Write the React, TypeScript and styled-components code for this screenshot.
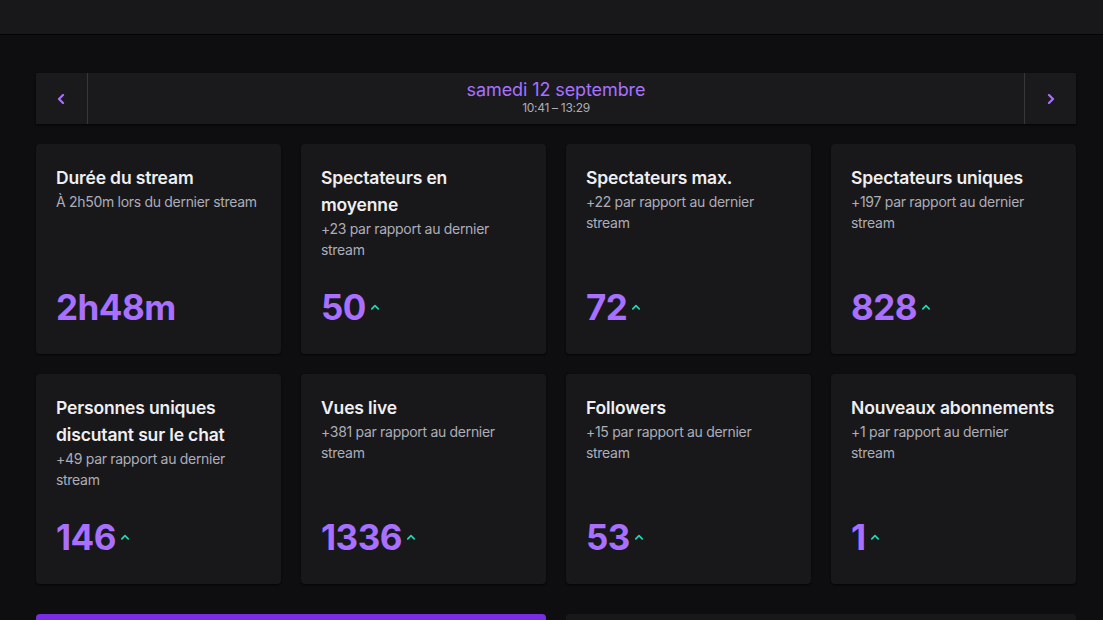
import styled, { createGlobalStyle } from 'styled-components';

// START: data
type Stat = { title: string; sub: string; value: string; up?: boolean };

const stats: Stat[] = [
    { title: 'Durée du stream', sub: 'À 2h50m lors du dernier stream', value: '2h48m' },
    { title: 'Spectateurs en moyenne', sub: '+23 par rapport au dernier stream', value: '50', up: true },
    { title: 'Spectateurs max.', sub: '+22 par rapport au dernier stream', value: '72', up: true },
    { title: 'Spectateurs uniques', sub: '+197 par rapport au dernier stream', value: '828', up: true },
    { title: 'Personnes uniques discutant sur le chat', sub: '+49 par rapport au dernier stream', value: '146', up: true },
    { title: 'Vues live', sub: '+381 par rapport au dernier stream', value: '1336', up: true },
    { title: 'Followers', sub: '+15 par rapport au dernier stream', value: '53', up: true },
    { title: 'Nouveaux abonnements', sub: '+1 par rapport au dernier stream', value: '1', up: true },
];

// START: icons
const Chevron = ({ dir }: { dir: 'left' | 'right' | 'up' }) => {
    const d = dir === 'left' ? 'M6 1 L2 5 L6 9' : dir === 'right' ? 'M3 1 L7 5 L3 9' : 'M1 6 L5 2 L9 6';
    return (
        <svg width="10" height="10" viewBox="0 0 10 10">
            <path d={d} fill="none" stroke="currentColor" strokeWidth="2.2" strokeLinecap="round" strokeLinejoin="round" />
        </svg>
    );
};

// START: page
const App = () => {
    return (
        <>
            <GlobalStyle />
            <TopBar />
            <Main>
                <DateNav>
                    <NavButton><Chevron dir="left" /></NavButton>
                    <DateInfo>
                        <DateLabel>samedi 12 septembre</DateLabel>
                        <TimeLabel>10:41 – 13:29</TimeLabel>
                    </DateInfo>
                    <NavButton $right><Chevron dir="right" /></NavButton>
                </DateNav>
                <Grid>
                    {stats.map((s) => (
                        <Card key={s.title}>
                            <CardTitle>{s.title}</CardTitle>
                            <CardSub>{s.sub}</CardSub>
                            <ValueRow>
                                <Value>{s.value}</Value>
                                {s.up && <Trend><Chevron dir="up" /></Trend>}
                            </ValueRow>
                        </Card>
                    ))}
                </Grid>
                <BottomRow>
                    <PurplePanel />
                    <DarkPanel />
                </BottomRow>
            </Main>
        </>
    );
};
export default App;

// START: styling
const GlobalStyle = createGlobalStyle`
    html, body {
        margin: 0;
        background: #0e0e10;
        font-family: Inter, "Noto Sans", sans-serif;
        overflow: hidden;
    }
`;

const TopBar = styled.header`
    height: 34px;
    background: #18181b;
    border-bottom: 1px solid #040405;
`;

const Main = styled.main`
    padding: 38px 27px 0 36px;
    display: flex;
    flex-direction: column;
`;

const DateNav = styled.div`
    display: flex;
    height: 51px;
    background: #1a1a1d;
    box-shadow: 0 1px 2px rgba(0, 0, 0, 0.8);
`;

const NavButton = styled.div<{ $right?: boolean }>`
    width: 51px;
    display: flex;
    align-items: center;
    justify-content: center;
    color: #a970ff;
    border-left: ${(p) => (p.$right ? '1px solid #36363b' : 'none')};
    border-right: ${(p) => (p.$right ? 'none' : '1px solid #36363b')};
`;

const DateInfo = styled.div`
    flex: 1;
    display: flex;
    flex-direction: column;
    align-items: center;
    justify-content: center;
    padding-bottom: 2px;
`;

const DateLabel = styled.div`
    color: #a970ff;
    font-size: 18px;
    line-height: 20px;
    letter-spacing: -0.1px;
`;

const TimeLabel = styled.div`
    color: #adadb8;
    font-size: 12px;
    line-height: 15px;
    letter-spacing: -0.3px;
`;

const Grid = styled.div`
    margin-top: 20px;
    display: grid;
    grid-template-columns: repeat(4, 1fr);
    gap: 20px;
`;

const Card = styled.div`
    height: 210px;
    box-sizing: border-box;
    background: #18181b;
    border-radius: 4px;
    box-shadow: 0 1px 2px rgba(0, 0, 0, 0.7);
    padding: 20px 20px 28px 20px;
    display: flex;
    flex-direction: column;
`;

const CardTitle = styled.div`
    color: #efeff1;
    font-size: 17.5px;
    font-weight: 600;
    line-height: 27px;
    letter-spacing: -0.15px;
`;

const CardSub = styled.div`
    color: #adadb8;
    font-size: 14px;
    line-height: 21px;
    letter-spacing: -0.3px;
    max-width: 202px;
`;

const ValueRow = styled.div`
    margin-top: auto;
    display: flex;
    align-items: center;
    gap: 4px;
`;

const Value = styled.div`
    color: #a970ff;
    font-size: 35px;
    font-weight: 700;
    line-height: 38px;
    letter-spacing: -0.5px;
`;

const Trend = styled.span`
    color: #1fd6b0;
    display: flex;
    transform: scale(0.8);
    margin-top: 2px;
`;

const BottomRow = styled.div`
    margin-top: 30px;
    display: grid;
    grid-template-columns: 1fr 1fr;
    gap: 20px;
`;

const PurplePanel = styled.div`
    height: 60px;
    background: #772ce8;
    border-radius: 4px;
`;

const DarkPanel = styled.div`
    height: 60px;
    background: #18181b;
    border-radius: 4px;
`;
